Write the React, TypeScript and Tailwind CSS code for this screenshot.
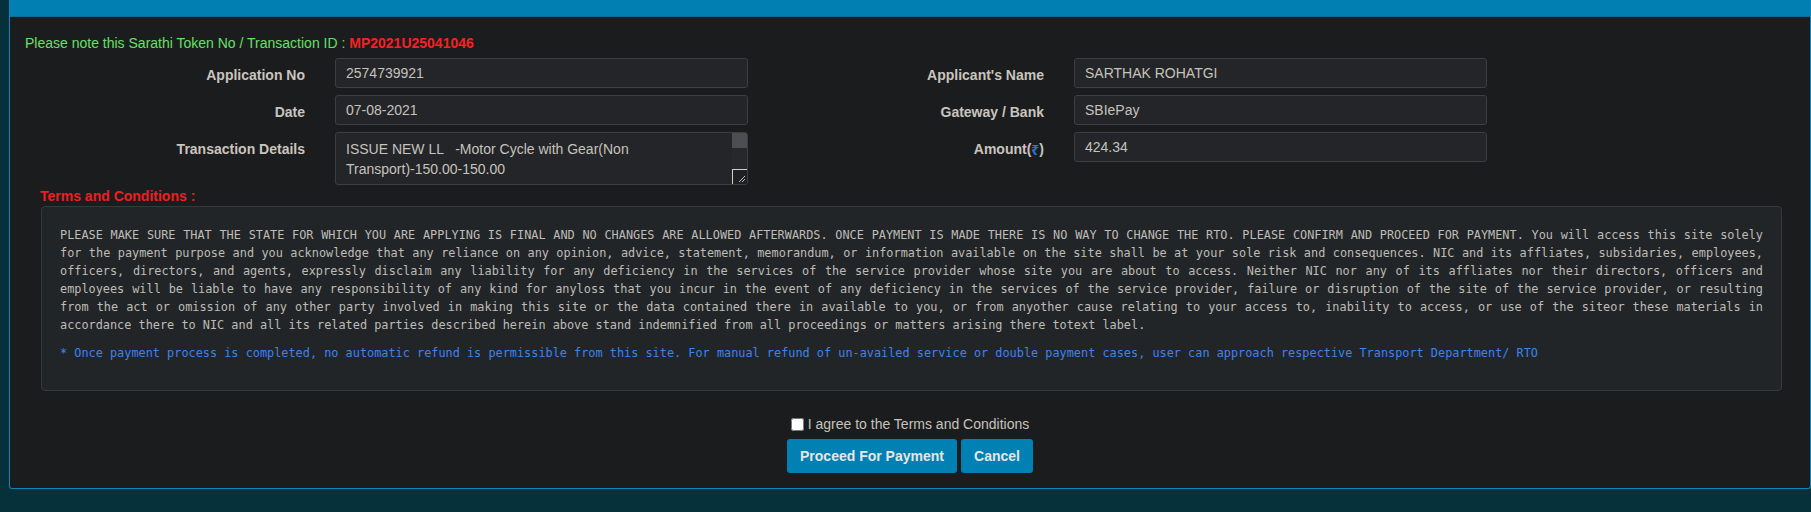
import React from 'react'

const termsLines = [
  'PLEASE MAKE SURE THAT THE STATE FOR WHICH YOU ARE APPLYING IS FINAL AND NO CHANGES ARE ALLOWED AFTERWARDS. ONCE PAYMENT IS MADE THERE IS NO WAY TO CHANGE THE RTO. PLEASE CONFIRM AND PROCEED FOR PAYMENT. You will access this site solely',
  'for the payment purpose and you acknowledge that any reliance on any opinion, advice, statement, memorandum, or information available on the site shall be at your sole risk and consequences. NIC and its affliates, subsidaries, employees,',
  'officers, directors, and agents, expressly disclaim any liability for any deficiency in the services of the service provider whose site you are about to access. Neither NIC nor any of its affliates nor their directors, officers and',
  'employees will be liable to have any responsibility of any kind for anyloss that you incur in the event of any deficiency in the services of the service provider, failure or disruption of the site of the service provider, or resulting',
  'from the act or omission of any other party involved in making this site or the data contained there in available to you, or from anyother cause relating to your access to, inability to access, or use of the siteor these materials in',
]

function Label({ children }: { children: React.ReactNode }) {
  return (
    <div className="flex h-[30px] items-center justify-end pt-1 text-[14px] font-bold text-[#c9c5be]">
      {children}
    </div>
  )
}

function Field({ value }: { value: string }) {
  return (
    <div className="flex h-[30px] items-center rounded-[3px] border border-[#3b3e42] bg-[#232528] pl-[10px] text-[14px] text-[#c6c3bd]">
      {value}
    </div>
  )
}

function FakeTextarea() {
  return (
    <div className="flex h-[53px] overflow-hidden rounded-[3px] border border-[#3b3e42] bg-[#232528]">
      <div className="flex-1 pl-[10px] pt-[6px] text-[14px] leading-[20px] text-[#c6c3bd] whitespace-pre">
        <div>ISSUE NEW LL   -Motor Cycle with Gear(Non</div>
        <div>Transport)-150.00-150.00</div>
      </div>
      <div className="flex w-[15px] flex-col bg-[#26292c]">
        <div className="h-[15px] bg-[#4b4f53]" />
        <div className="flex-1" />
        <div className="relative h-[15px] border-l border-t border-[#cfcfcf] bg-[#1e2022]">
          <svg className="absolute bottom-[1px] right-[1px]" width="9" height="9" viewBox="0 0 9 9">
            <path d="M8 2 L2 8 M8 5 L5 8" stroke="#bdbdbd" strokeWidth="1" />
          </svg>
        </div>
      </div>
    </div>
  )
}

export default function App() {
  return (
    <div className="h-[512px] w-full overflow-hidden bg-[#06303a]" style={{ fontFamily: '"Liberation Sans", Arial, sans-serif' }}>
      <div className="ml-[9px] w-[1802px] rounded-b-[3px] border-x border-b border-[#0a86bd] bg-[#1b1c1e]">
        <div className="h-[17px] border-b border-[#0a6d96] bg-[#017fb3]" />
        <div className="pb-[15px]">
          <p className="mt-[18px] pl-[15px] text-[14px] leading-[16px] text-[#66e066]">
            Please note this Sarathi Token No / Transaction ID :{' '}
            <span className="font-bold text-[#f52222]">MP2021U25041046</span>
          </p>

          <div className="mt-[7px] grid grid-cols-[295px_443px_296px_443px] gap-y-[7px]">
            <Label>Application No</Label>
            <div className="ml-[30px] w-[413px]"><Field value="2574739921" /></div>
            <Label>Applicant's Name</Label>
            <div className="ml-[30px] w-[413px]"><Field value="SARTHAK ROHATGI" /></div>

            <Label>Date</Label>
            <div className="ml-[30px] w-[413px]"><Field value="07-08-2021" /></div>
            <Label>Gateway / Bank</Label>
            <div className="ml-[30px] w-[413px]"><Field value="SBIePay" /></div>

            <Label>Transaction Details</Label>
            <div className="ml-[30px] w-[413px]"><FakeTextarea /></div>
            <Label>
              Amount(<span className="text-[#2f6fd6]" style={{ fontFamily: '"Noto Sans", "DejaVu Sans", sans-serif' }}>₹</span>)
            </Label>
            <div className="ml-[30px] w-[413px]"><Field value="424.34" /></div>
          </div>

          <p className="mt-[3px] pl-[30px] text-[14px] font-bold leading-[16px] text-[#f01e1e]">Terms and Conditions :</p>

          <div
            className="ml-[31px] mt-[2px] w-[1741px] rounded-[4px] border border-[#36393c] bg-[#222528] pb-[28px] pl-[18px] pr-[18px] pt-[19px]"
            style={{ fontFamily: '"DejaVu Sans Mono", "Liberation Mono", monospace' }}
          >
            <div className="text-[11.86px] leading-[18px] text-[#bfbcb6]">
              {termsLines.map((line, i) => (
                <div key={i} className="text-justify [text-align-last:justify]">{line}</div>
              ))}
              <div>accordance there to NIC and all its related parties described herein above stand indemnified from all proceedings or matters arising there totext label.</div>
            </div>
            <p className="mt-[10px] text-[11.86px] leading-[18px] text-[#3a84ee]">
              * Once payment process is completed, no automatic refund is permissible from this site. For manual refund of un-availed service or double payment cases, user can approach respective Transport Department/ RTO
            </p>
          </div>

          <div className="mt-[25px] flex h-[16px] items-center justify-center">
            <input type="checkbox" className="m-0 h-[13px] w-[13px]" />
            <span className="ml-[4px] text-[14px] text-[#c6c3bd]">I agree to the Terms and Conditions</span>
          </div>

          <div className="mt-[7px] flex justify-center gap-[4px]">
            <button className="h-[34px] w-[170px] rounded-[3px] bg-[#0180b4] text-[14px] font-bold text-[#e6e6e6]">
              Proceed For Payment
            </button>
            <button className="h-[34px] w-[72px] rounded-[3px] bg-[#0180b4] text-[14px] font-bold text-[#e6e6e6]">
              Cancel
            </button>
          </div>
        </div>
      </div>
    </div>
  )
}
